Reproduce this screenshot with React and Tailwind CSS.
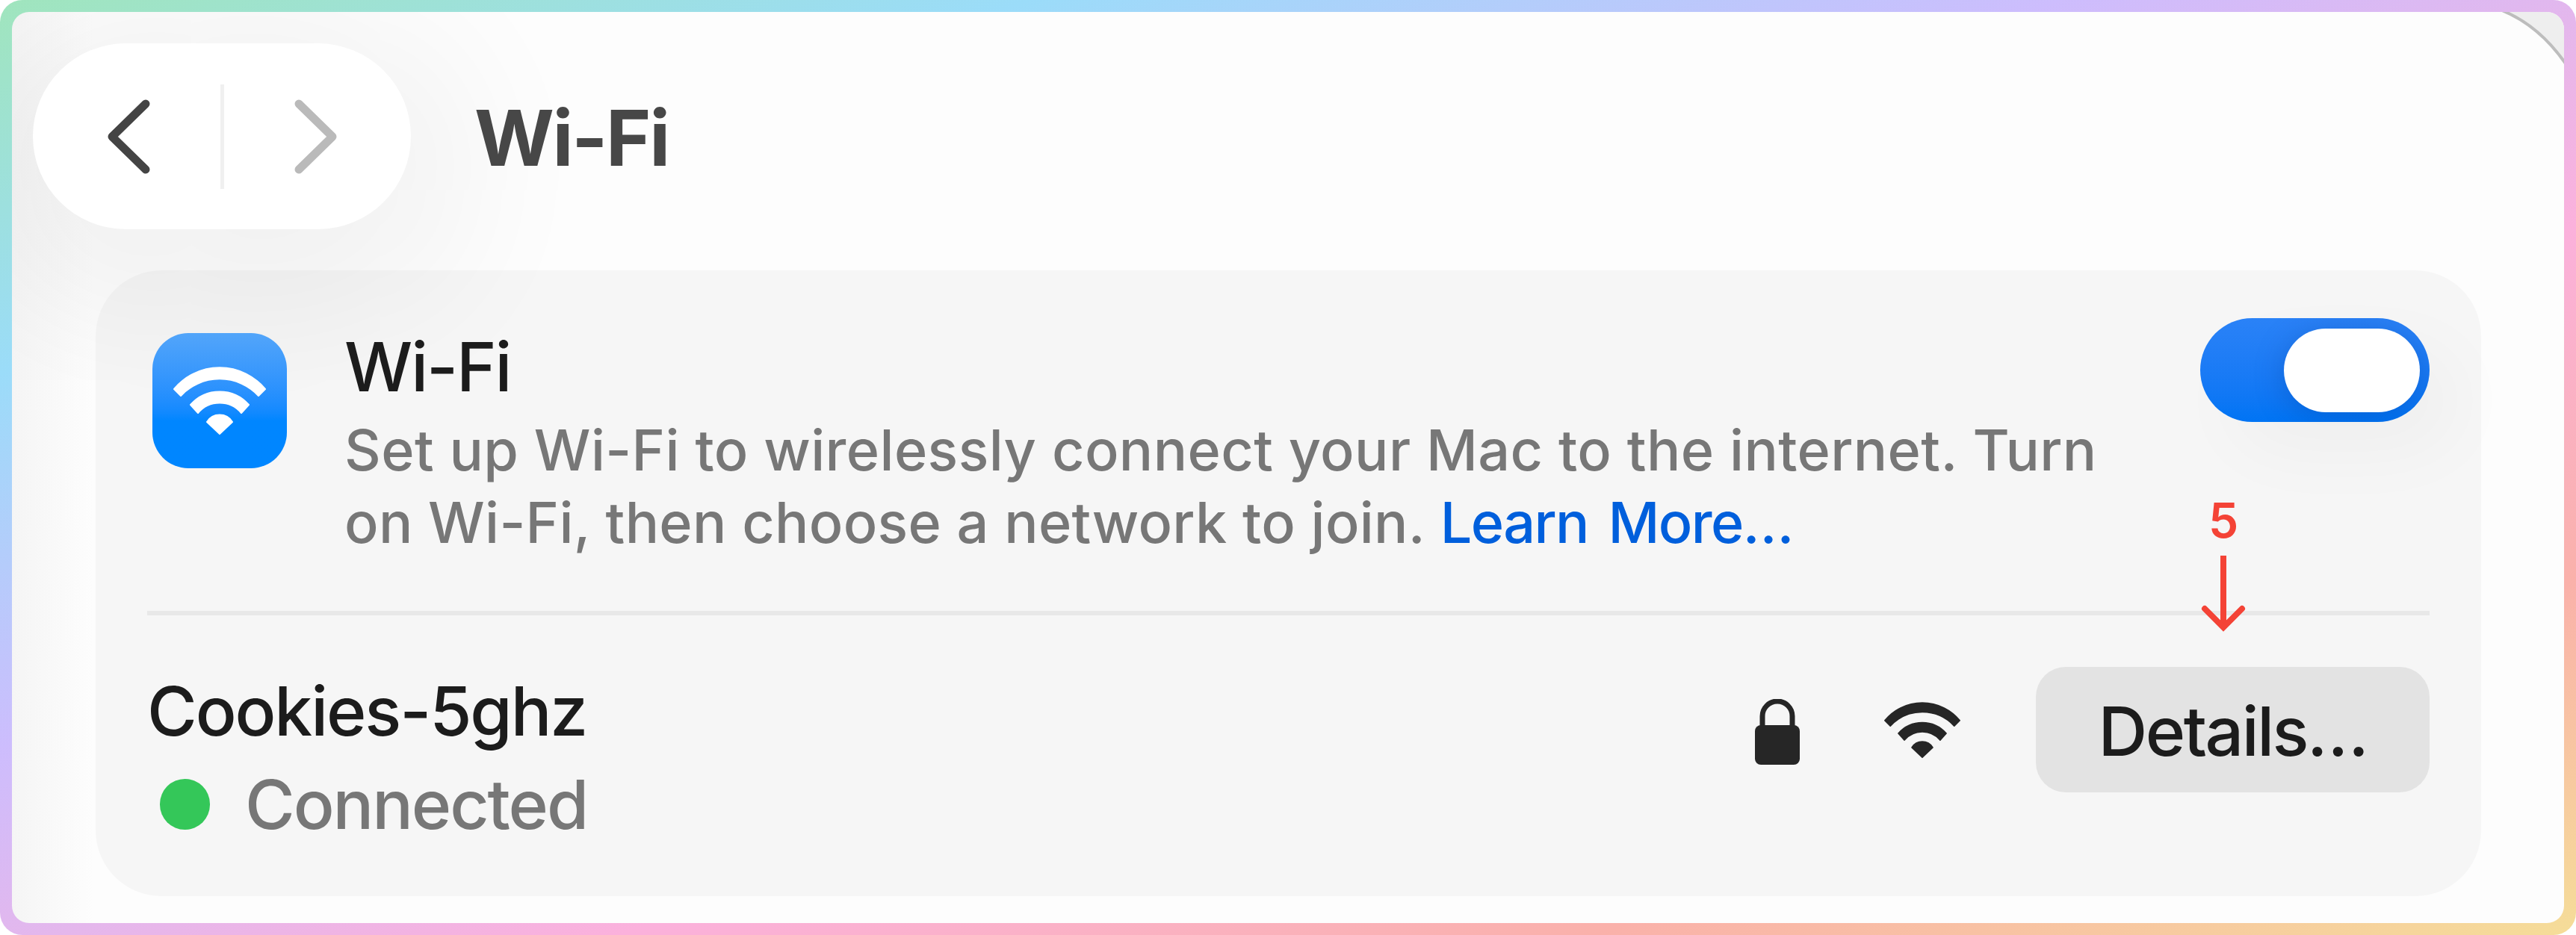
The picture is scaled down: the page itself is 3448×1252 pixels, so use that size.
import React from 'react';

function WifiGlyph({ className }) {
  return (
    <svg viewBox="-62 -91 124 91" className={className} fill="currentColor" stroke="currentColor" strokeWidth="2" strokeLinejoin="round">
      <path d="M-61 -61A79 79 0 0 1 61 -61L52 -52A71 71 0 0 0 -52 -52Z" />
      <path d="M-39 -40A52 52 0 0 1 39 -40L29 -29A38 38 0 0 0 -29 -29Z" />
      <path d="M-17 -17A20 20 0 0 1 17 -17L0 -1Z" />
    </svg>
  );
}

function LockGlyph() {
  return (
    <svg viewBox="0 0 62 88" className="w-[62px] h-[88px] mt-[5px]">
      <path d="M11 42V23a20 20 0 0 1 40 0V42" fill="none" stroke="#262626" strokeWidth="7" />
      <rect x="1" y="35" width="60" height="53" rx="8" fill="#262626" />
    </svg>
  );
}

function NavButtons() {
  return (
    <div className="flex items-center justify-center w-[506px] h-[249px] rounded-full bg-white shadow-[0_44px_210px_70px_rgba(0,0,0,0.055)]">
      <svg viewBox="0 0 60 100" className="w-[60px] h-[100px]" fill="none" stroke="#444444" strokeWidth="11" strokeLinecap="round" strokeLinejoin="round">
        <path d="M53 6L8 50L53 94" />
      </svg>
      <div className="w-[5px] h-[140px] mx-[93px] bg-[#f0f0f0]" />
      <svg viewBox="0 0 60 100" className="w-[60px] h-[100px]" fill="none" stroke="#bababa" strokeWidth="11" strokeLinecap="round" strokeLinejoin="round">
        <path d="M7 6L52 50L7 94" />
      </svg>
    </div>
  );
}

function Toggle() {
  return (
    <div className="w-[307px] h-[139px] rounded-full shadow-[40px_40px_100px_rgba(0,0,0,0.03)]">
      <div className="flex items-center justify-end h-full pr-[13px] rounded-full overflow-hidden bg-linear-to-b from-[#2a82f7] to-[#0074f4]">
        <div className="w-[182px] h-[112px] rounded-full bg-white shadow-[0_6px_40px_rgba(0,40,120,0.25)]" />
      </div>
    </div>
  );
}

export default function App() {
  return (
    <div className="w-[3448px] h-[1252px] p-4 rounded-[30px] bg-[linear-gradient(to_bottom_right,#a0e5bd_0%,#9bdcf9_20%,#cdbdfd_40%,#fbb1dc_62%,#fab1aa_81%,#f5dd98_100%)] font-['Inter','Liberation_Sans',sans-serif] font-[450]">
      <div className="relative h-full rounded-[23px] overflow-hidden bg-[linear-gradient(to_right,#f5f5f5,#fdfdfd_110px,#fdfdfd)]">
        <header className="flex items-center h-[346px] pl-7 pt-[42px] pb-[55px]">
          <NavButtons />
          <h1 className="ml-[85px] mt-1 text-[103px] leading-none font-bold tracking-[-2.3px] text-[#474747]">Wi-Fi</h1>
        </header>

        <main className="ml-[112px] w-[3193px] h-[838px] px-[69px] rounded-[88px] bg-black/[0.028]">
          <section className="flex items-start h-[456px] pt-[64px]">
            <div className="flex justify-center w-[180px] h-[181px] ml-[7px] mt-5 pt-[45px] rounded-[48px] bg-linear-to-b from-[#52a5fa] to-[#0086ff] to-65% text-white">
              <WifiGlyph className="w-[124px] h-[91px]" />
            </div>
            <div className="ml-[77px] flex-1 pt-[10px]">
              <h2 className="text-[91px] leading-[110px] tracking-[-2.1px] font-[450] text-[#1c1c1c]">Wi-Fi</h2>
              <p className="mt-2 text-[75.5px] leading-[97px] text-[#777777]">
                <span className="block whitespace-nowrap tracking-[0.38px]">Set up Wi-Fi to wirelessly connect your Mac to the internet. Turn</span>
                <span className="block whitespace-nowrap tracking-[0.3px]">
                  on Wi-Fi, then choose a network to join. <a className="text-[#005fdc] font-medium tracking-[-1.6px] [word-spacing:8px]">Learn More…</a>
                </span>
              </p>
            </div>
            <Toggle />
          </section>
          <div className="h-[6px] bg-[#e8e8e8]" />

          <section className="flex">
            <div className="flex-1 pt-[73px]">
              <h3 className="text-[91px] leading-[110px] tracking-[-2.1px] font-[450] text-[#1c1c1c]">Cookies-5ghz</h3>
              <div className="flex items-center mt-[15px]">
                <span className="w-[67px] h-[68px] ml-[17px] rounded-full bg-[#34c759]" />
                <span className="ml-[47px] text-[91px] leading-[110px] tracking-[-2.1px] text-[#777777]">Connected</span>
              </div>
            </div>
            <div className="flex items-center h-[168px] mt-[69px] text-[#262626]">
              <LockGlyph />
              <WifiGlyph className="w-[102px] h-[75px] ml-[112px]" />
              <button className="w-[527px] h-[168px] ml-[101px] pt-1 rounded-[40px] bg-[#e3e3e3] text-[91px] tracking-[-2.5px] font-[450] text-[#1c1c1c]">Details…</button>
            </div>
          </section>
        </main>

        {/* step marker pointing at the Details button */}
        <div className="absolute left-[2928px] top-[650px] w-[64px] flex flex-col items-center text-[#f44336]">
          <span className="text-[64px] leading-[62px] font-semibold">5</span>
          <svg viewBox="0 0 64 104" className="w-16 h-[104px] mt-4" fill="none" stroke="currentColor" strokeWidth="8">
            <path d="M32 0V96" />
            <path d="M7 71L32 96L57 71" strokeLinecap="round" />
          </svg>
        </div>

        {/* window corner */}
        <svg viewBox="0 0 100 80" className="absolute right-0 top-0 w-[100px] h-[80px]">
          <path d="M12 -4Q66 16 104 72V-4Z" fill="#eeeeee" stroke="#bdbdbd" strokeWidth="4" />
        </svg>
      </div>
    </div>
  );
}
